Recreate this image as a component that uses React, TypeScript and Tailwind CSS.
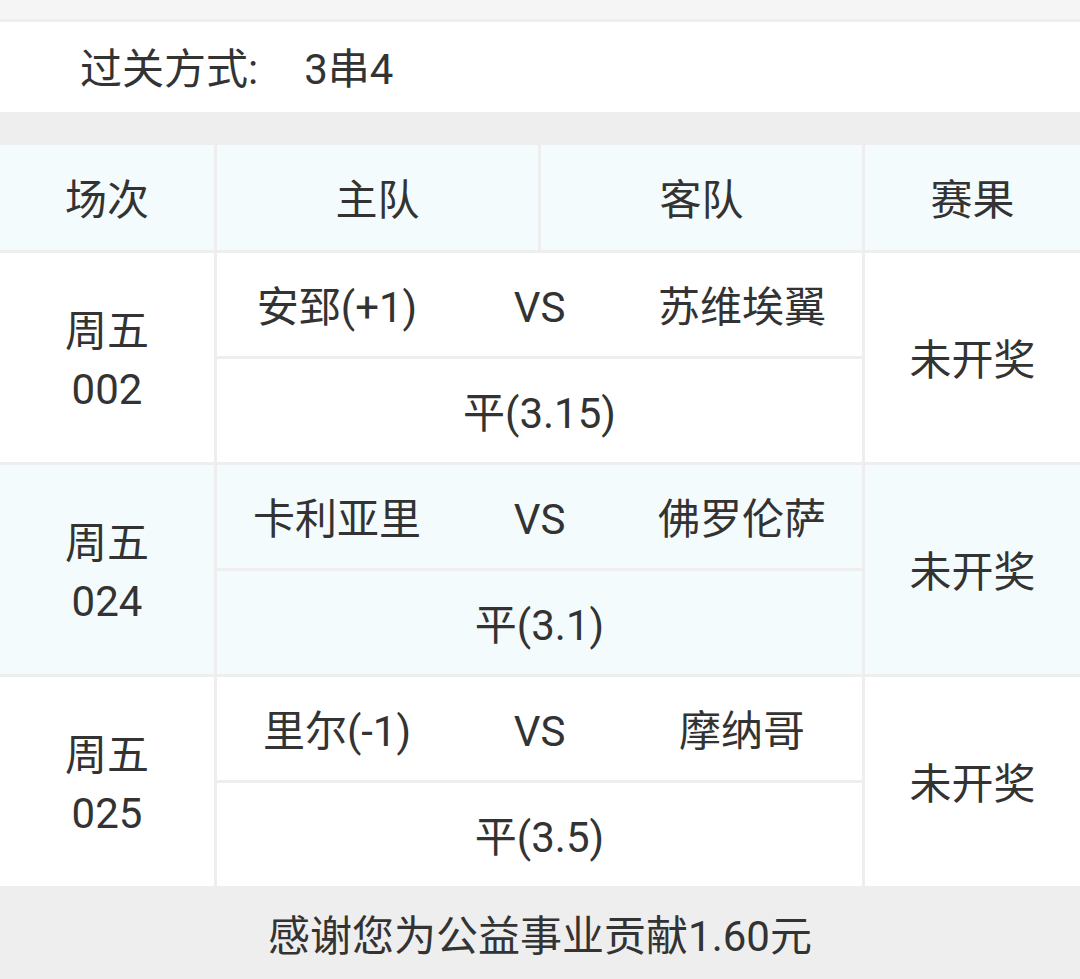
const FONT = "font-['Roboto','Noto_Sans_CJK_SC',sans-serif]";

type Match = {
  day: string;
  no: string;
  home: string;
  away: string;
  pick: string;
  result: string;
  tint?: boolean;
};

const matches: Match[] = [
  { day: "周五", no: "002", home: "安郅(+1)", away: "苏维埃翼", pick: "平(3.15)", result: "未开奖" },
  { day: "周五", no: "024", home: "卡利亚里", away: "佛罗伦萨", pick: "平(3.1)", result: "未开奖", tint: true },
  { day: "周五", no: "025", home: "里尔(-1)", away: "摩纳哥", pick: "平(3.5)", result: "未开奖" },
];

function MatchRow({ m }: { m: Match }) {
  const bg = m.tint ? "bg-[#f4fbfc]" : "bg-white";
  return (
    <div className="grid h-[209px] grid-cols-[214px_1fr_215px] gap-x-[3px]">
      <div className={`${bg} flex flex-col items-center justify-center pt-[6px] leading-[58px]`}>
        <span>{m.day}</span>
        <span>{m.no}</span>
      </div>
      <div className="grid grid-rows-2 gap-y-[3px]">
        <div className={`${bg} grid grid-cols-[240px_1fr_240px] items-center pt-[6px] text-center`}>
          <span>{m.home}</span>
          <span>VS</span>
          <span>{m.away}</span>
        </div>
        <div className={`${bg} flex items-center justify-center pt-[6px]`}>{m.pick}</div>
      </div>
      <div className={`${bg} flex items-center justify-center pt-[6px]`}>{m.result}</div>
    </div>
  );
}

export default function App() {
  return (
    <div className={`${FONT} h-[979px] w-[1080px] overflow-hidden bg-[#eeeeee] text-[42px] text-[#333333]`}>
      <div className="h-[19px] bg-[#f5f5f5]" />
      <div className="mt-[3px] flex h-[90px] items-center bg-white pl-[80px] pt-[4px]">
        <span>过关方式:</span>
        <span className="ml-[46px]">3串4</span>
      </div>

      <div className="mt-[33px] flex flex-col gap-y-[3px]">
        <div className="grid h-[105px] grid-cols-[214px_1fr_1fr_215px] gap-x-[3px] bg-[#eeeeee]">
          {["场次", "主队", "客队", "赛果"].map((h) => (
            <div key={h} className="flex items-center justify-center bg-[#f4fbfc] pt-[6px]">
              {h}
            </div>
          ))}
        </div>
        {matches.map((m) => (
          <MatchRow key={m.no} m={m} />
        ))}
      </div>

      <div className="flex h-[92px] items-center justify-center pt-[8px]">感谢您为公益事业贡献1.60元</div>
    </div>
  );
}
